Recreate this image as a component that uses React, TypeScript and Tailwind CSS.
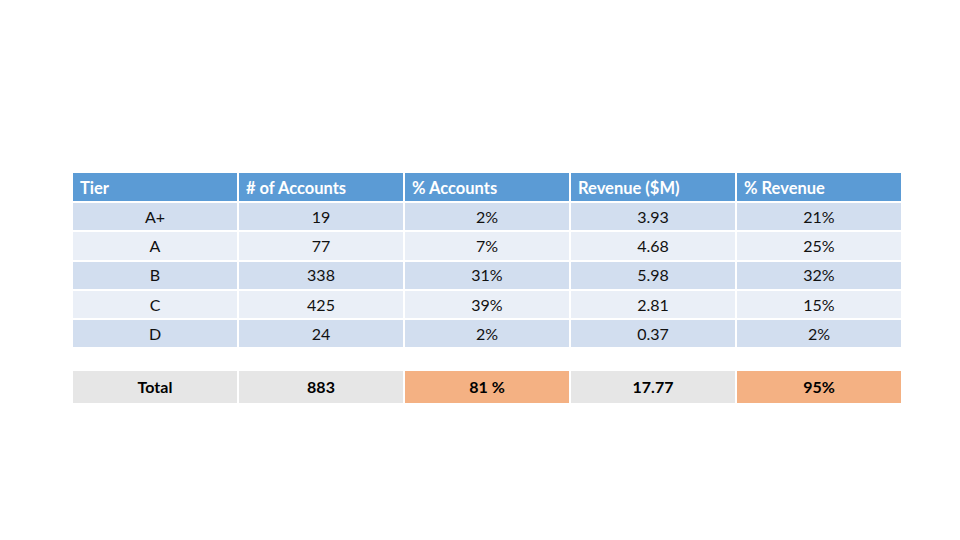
import React from 'react';

const header = ['Tier', '# of Accounts', '% Accounts', 'Revenue ($M)', '% Revenue'];

const rows = [
  ['A+', '19', '2%', '3.93', '21%'],
  ['A', '77', '7%', '4.68', '25%'],
  ['B', '338', '31%', '5.98', '32%'],
  ['C', '425', '39%', '2.81', '15%'],
  ['D', '24', '2%', '0.37', '2%'],
];

const totals = ['Total', '883', '81 %', '17.77', '95%'];

export default function App() {
  return (
    <div className="w-[960px] h-[540px] bg-white font-['Lato','Liberation_Sans',sans-serif] text-black">
      <div className="pt-[173px] pl-[73px]">
        {/* Main table */}
        <div className="grid grid-cols-[164px_164px_164px_164px_164px] grid-rows-[28px_repeat(5,27.3px)] gap-[2px] w-[828px]">
          {header.map((h) => (
            <div key={h} className="bg-[#5b9bd5] text-white font-bold text-[16.5px] flex items-center pl-[7px] pt-[2px]">
              {h}
            </div>
          ))}
          {rows.map((r, i) =>
            r.map((c, j) => (
              <div
                key={`${i}-${j}`}
                className={`flex items-center justify-center text-[16px] text-[#111] ${i % 2 === 0 ? 'bg-[#d2deef]' : 'bg-[#eaeff7]'}`}
              >
                {c}
              </div>
            ))
          )}
        </div>

        {/* Totals */}
        <div className="mt-[24px] grid grid-cols-[164px_164px_164px_164px_164px] gap-[2px] w-[828px] h-[32px]">
          {totals.map((t, j) => (
            <div
              key={t}
              className={`flex items-center justify-center font-bold text-[16px] ${j === 2 || j === 4 ? 'bg-[#f4b183]' : 'bg-[#e6e6e6]'}`}
            >
              {t}
            </div>
          ))}
        </div>
      </div>
    </div>
  );
}
